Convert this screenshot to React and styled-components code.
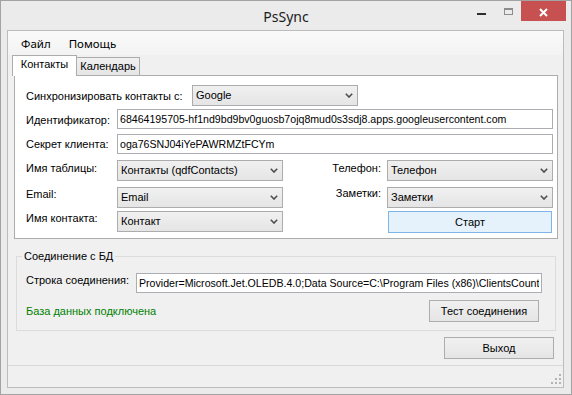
import React from "react";
import styled, { createGlobalStyle } from "styled-components";

const GlobalStyle = createGlobalStyle`
  html, body { margin: 0; padding: 0; background: #ffffff; }
  *, *::before, *::after { box-sizing: border-box; }
`;

const UI_FONT = `"Liberation Sans", Arial, sans-serif`;
const SEGOE = `"Segoe UI", "Noto Sans", "DejaVu Sans", sans-serif`;

const Window = styled.div`
  width: 572px;
  height: 395px;
  display: flex;
  flex-direction: column;
  background: #ebebeb;
  border: 1px solid #a3a3a3;
  font-family: ${UI_FONT};
  font-size: 11px;
  line-height: 13px;
  color: #000;
`;

const TitleBar = styled.div`
  height: 29px;
  flex: none;
  display: grid;
  grid-template-columns: 1fr auto 1fr;
`;

const Title = styled.div`
  grid-column: 2;
  font-family: ${SEGOE};
  font-size: 14px;
  line-height: 31px;
  color: #1b1b1b;
`;

const Caption = styled.div`
  grid-column: 3;
  justify-self: end;
  display: flex;
  margin-right: 5px;
`;

const CaptionButton = styled.div`
  width: ${(p) => p.$w}px;
  height: 20px;
  background: ${(p) => (p.$close ? "#c75050" : "transparent")};
  & svg { display: block; }
`;

const Client = styled.div`
  flex: 1;
  margin: 0 7px 6px 6px;
  border: 1px solid #bcbcbc;
  background: #f0f0f0;
  display: flex;
  flex-direction: column;
`;

const MenuBar = styled.div`
  height: 24px;
  flex: none;
  display: flex;
  align-items: center;
  padding-left: 4px;
  background: linear-gradient(#fafafa, #f3f3f3);
  font-family: ${SEGOE};
  font-size: 11.5px;
`;

const MenuItem = styled.span`
  padding: 0 9px;
`;

const TabStrip = styled.div`
  height: 20px;
  flex: none;
  display: flex;
  align-items: flex-end;
  padding-left: 4px;
`;

const Tab = styled.div`
  width: ${(p) => p.$w}px;
  height: ${(p) => (p.$active ? 21 : 18)}px;
  margin-bottom: ${(p) => (p.$active ? -1 : 0)}px;
  padding-top: 2px;
  text-align: center;
  border: 1px solid #acacac;
  border-bottom: none;
  border-left-width: ${(p) => (p.$active ? 1 : 0)}px;
  background: ${(p) => (p.$active ? "#ffffff" : "linear-gradient(#f0f0f0, #e5e5e5)")};
  position: relative;
  z-index: ${(p) => (p.$active ? 1 : 0)};
`;

const TabPage = styled.div`
  margin-left: 6px;
  width: 544px;
  height: 164px;
  flex: none;
  border: 1px solid #acacac;
  background: #ffffff;
  padding: 9px 4px 5px 11px;
  display: flex;
  flex-direction: column;
`;

const Row = styled.div`
  display: flex;
  align-items: flex-start;
  margin-top: ${(p) => p.$mt || 0}px;
`;

const Label = styled.div`
  flex: none;
  width: ${(p) => (p.$w ? `${p.$w}px` : "auto")};
  margin-top: ${(p) => p.$mt || 0}px;
  margin-right: ${(p) => p.$mr || 0}px;
  white-space: nowrap;
  color: ${(p) => p.$color || "#000"};
`;

const Side = styled.div`
  margin-left: auto;
  display: flex;
  align-items: flex-start;
`;

const TextBox = styled.input.attrs({ type: "text", readOnly: true })`
  flex: none;
  width: ${(p) => p.$w}px;
  height: 20px;
  border: 1px solid #abadb3;
  padding: 0 2px;
  margin: 0;
  background: #ffffff;
  font-family: ${UI_FONT};
  font-size: 10.6px;
  color: #000;
  outline: none;
`;

const ComboBox = styled.div`
  flex: none;
  width: 166px;
  height: 21px;
  display: flex;
  align-items: center;
  justify-content: space-between;
  padding: 0 4px 0 3px;
  border: 1px solid #acacac;
  background: linear-gradient(#f0f0f0, #e5e5e5);
  white-space: nowrap;
  & svg { display: block; flex: none; }
`;

const Button = styled.button`
  flex: none;
  width: ${(p) => p.$w}px;
  height: 22px;
  margin: 0 ${(p) => p.$mr || 0}px 0 0;
  padding: 0;
  border: 1px solid ${(p) => (p.$focused ? "#7eb4ea" : "#adadad")};
  background: ${(p) => (p.$focused ? "#e5f1fb" : "linear-gradient(#f0f0f0, #e5e5e5)")};
  font: inherit;
  color: #000;
`;

const Group = styled.fieldset`
  margin: 11px 7px 0 8px;
  padding: 0 13px 8px 9px;
  border: 1px solid #dcdcdc;
  min-width: 0;
  flex: none;
`;

const Legend = styled.legend`
  margin-left: -4px;
  padding: 0 2px;
  line-height: 13px;
`;

const GroupRow = styled.div`
  display: flex;
  align-items: ${(p) => p.$align || "flex-start"};
  justify-content: space-between;
  margin-top: ${(p) => p.$mt || 0}px;
`;

const Footer = styled.div`
  display: flex;
  justify-content: flex-end;
  margin-top: 6px;
  padding-right: 9px;
  flex: none;
`;

const StatusBar = styled.div`
  height: 22px;
  margin-top: 6px;
  flex: none;
  border-top: 1px solid #d9d9d9;
  display: flex;
  justify-content: flex-end;
  align-items: flex-end;
  padding: 0 2px 3px 0;
  & svg { display: block; }
`;

const Chevron = () => (
  <svg width="8" height="5" viewBox="0 0 8 5">
    <polyline points="0.8,0.8 4,4 7.2,0.8" fill="none" stroke="#4d4d4d" strokeWidth="1.6" />
  </svg>
);

const Combo = ({ children }) => (
  <ComboBox>
    <span>{children}</span>
    <Chevron />
  </ComboBox>
);

const Grip = () => (
  <svg width="10" height="10" viewBox="0 0 10 10">
    {[[8, 0], [4, 4], [8, 4], [0, 8], [4, 8], [8, 8]].map(([x, y]) => (
      <rect key={`${x}-${y}`} x={x} y={y} width="2" height="2" fill="#b4b4b4" />
    ))}
  </svg>
);

export default function App() {
  return (
    <>
      <GlobalStyle />
      <Window>
        <TitleBar>
          <Title>PsSync</Title>
          <Caption>
            <CaptionButton $w={26}>
              <svg width="26" height="20">
                <rect x="8" y="12" width="9" height="2" fill="#2e2e2e" />
              </svg>
            </CaptionButton>
            <CaptionButton $w={26}>
              <svg width="26" height="20">
                <rect x="9.5" y="7.5" width="8" height="6" fill="none" stroke="#8c8c8c" />
                <rect x="9" y="7" width="9" height="2" fill="#8c8c8c" />
              </svg>
            </CaptionButton>
            <CaptionButton $w={45} $close>
              <svg width="45" height="20">
                <path d="M19 8 L26 15 M26 8 L19 15" stroke="#ffffff" strokeWidth="2" />
              </svg>
            </CaptionButton>
          </Caption>
        </TitleBar>

        <Client>
          <MenuBar>
            <MenuItem>Файл</MenuItem>
            <MenuItem>Помощь</MenuItem>
          </MenuBar>

          <TabStrip>
            <Tab $active $w={65}>Контакты</Tab>
            <Tab $w={63}>Календарь</Tab>
          </TabStrip>

          <TabPage>
            <Row>
              <Label $w={166} $mt={5}>Синхронизировать контакты с:</Label>
              <Combo>Google</Combo>
            </Row>
            <Row $mt={3}>
              <Label $w={91} $mt={5}>Идентификатор:</Label>
              <TextBox $w={436} defaultValue="68464195705-hf1nd9bd9bv0guosb7ojq8mud0s3sdj8.apps.googleusercontent.com" />
            </Row>
            <Row $mt={5}>
              <Label $w={91} $mt={4}>Секрет клиента:</Label>
              <TextBox $w={436} defaultValue="oga76SNJ04iYePAWRMZtFCYm" />
            </Row>
            <Row $mt={6}>
              <Label $w={91} $mt={2}>Имя таблицы:</Label>
              <Combo>Контакты (qdfContacts)</Combo>
              <Side>
                <Label $mt={2} $mr={6}>Телефон:</Label>
                <Combo>Телефон</Combo>
              </Side>
            </Row>
            <Row $mt={6}>
              <Label $w={91} $mt={1}>Email:</Label>
              <Combo>Email</Combo>
              <Side>
                <Label $mt={0} $mr={6}>Заметки:</Label>
                <Combo>Заметки</Combo>
              </Side>
            </Row>
            <Row $mt={3}>
              <Label $w={91} $mt={1}>Имя контакта:</Label>
              <Combo>Контакт</Combo>
              <Side>
                <Button $w={164} $mr={1} $focused>Старт</Button>
              </Side>
            </Row>
          </TabPage>

          <Group>
            <Legend>Соединение с БД</Legend>
            <GroupRow $mt={10}>
              <Label $w={110} $mt={1}>Строка соединения:</Label>
              <TextBox $w={406} defaultValue="Provider=Microsoft.Jet.OLEDB.4.0;Data Source=C:\Program Files (x86)\ClientsCount\ClientsCount.mdb" />
            </GroupRow>
            <GroupRow $mt={7} $align="center">
              <Label $color="#008000">База данных подключена</Label>
              <Button $w={110} $mr={3}>Тест соединения</Button>
            </GroupRow>
          </Group>

          <Footer>
            <Button $w={110}>Выход</Button>
          </Footer>

          <StatusBar>
            <Grip />
          </StatusBar>
        </Client>
      </Window>
    </>
  );
}
